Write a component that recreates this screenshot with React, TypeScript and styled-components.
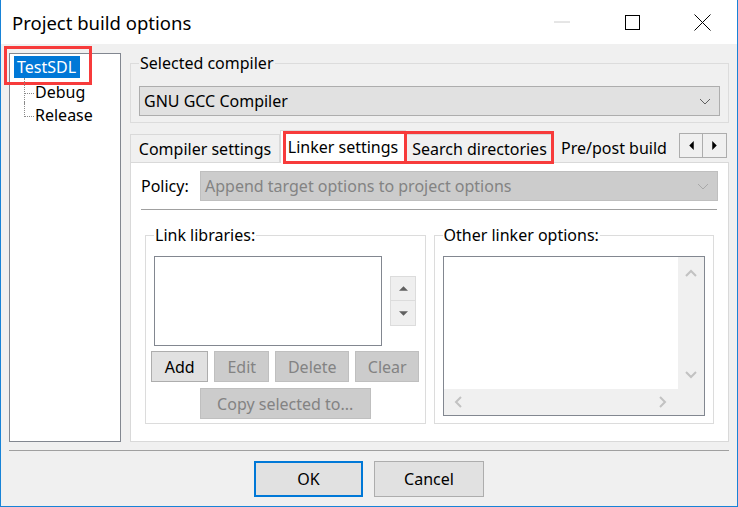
import React, { ReactElement } from 'react';
import styled, { createGlobalStyle, css } from 'styled-components';

const GlobalStyle = createGlobalStyle`
  html, body {
    margin: 0;
    padding: 0;
    background: #ffffff;
  }
  body {
    font-family: 'Noto Sans', 'Open Sans', sans-serif;
    font-size: 16px;
    color: #000000;
  }
  * {
    box-sizing: border-box;
  }
`;

const RED = '#f73b3b';

const Window = styled.div`
  width: 738px;
  height: 507px;
  display: flex;
  flex-direction: column;
  background: #f0f0f0;
  border: 1px solid #1883d7;
  border-top: none;
  overflow: hidden;
`;

const TitleBar = styled.header`
  height: 44px;
  flex: none;
  display: flex;
  align-items: center;
  background: #ffffff;
  padding-left: 11px;
`;

const Title = styled.span`
  flex: 1;
  font-size: 18.5px;
`;

const Controls = styled.div`
  display: flex;
  height: 100%;
`;

const ControlButton = styled.div`
  width: 70px;
  display: flex;
  align-items: center;
  justify-content: center;
`;

const Main = styled.div`
  display: flex;
  gap: 9px;
  padding: 9px 8px 0;
  height: 398px;
  flex: none;
`;

const Tree = styled.div`
  width: 112px;
  flex: none;
  background: #ffffff;
  border: 1px solid #828790;
  padding: 2px 0 0 4px;
`;

const RootLabel = styled.span`
  position: relative;
  display: inline-block;
  height: 22px;
  line-height: 22px;
  padding: 0 4px 0 3px;
  background: #0078d7;
  color: #ffffff;

  &::after {
    content: '';
    position: absolute;
    top: -10px;
    left: -10px;
    right: -12px;
    bottom: -7px;
    border: 3px solid ${RED};
  }
`;

const Children = styled.div`
  margin: 3px 0 0 10px;
`;

const ChildRow = styled.div<{ $last?: boolean }>`
  position: relative;
  height: 23px;
  line-height: 23px;
  padding-left: 11px;

  &::before {
    content: '';
    position: absolute;
    left: 0;
    top: -3px;
    width: 9px;
    height: 15px;
    border-left: 1px dotted #8a8a8a;
    border-bottom: 1px dotted #8a8a8a;
  }

  ${({ $last }) =>
    !$last &&
    css`
      &::after {
        content: '';
        position: absolute;
        left: 0;
        top: 12px;
        bottom: 0;
        border-left: 1px dotted #8a8a8a;
      }
    `}
`;

const RightCol = styled.div`
  flex: 1;
  min-width: 0;
  display: flex;
  flex-direction: column;
`;

const Group = styled.fieldset<{ $grow?: boolean }>`
  margin: 0;
  min-width: 0;
  border: 1px solid #dcdcdc;
  padding: 0 8px 6px;
  ${({ $grow }) =>
    $grow &&
    css`
      flex: 1;
      display: flex;
      flex-direction: column;
      align-items: center;
      padding-bottom: 4px;
    `}
`;

const Legend = styled.legend`
  padding: 0 1px;
  line-height: 20px;
  height: 20px;
`;

const Combo = styled.div<{ $disabled?: boolean }>`
  height: 30px;
  display: flex;
  align-items: center;
  justify-content: space-between;
  padding: 0 8px 0 4px;
  background: #e1e1e1;
  border: 1px solid #adadad;
  white-space: nowrap;
  ${({ $disabled }) =>
    $disabled &&
    css`
      background: #cccccc;
      border-color: #bfbfbf;
      color: #838383;
    `}
`;

const CompilerCombo = styled(Combo)`
  margin-top: 13px;
`;

const TabRow = styled.div`
  display: flex;
  align-items: flex-end;
  height: 32px;
  margin-top: 7px;
`;

const Tab = styled.div<{ $active?: boolean; $marked?: boolean; $w?: number }>`
  position: relative;
  width: ${({ $w }) => ($w ? `${$w}px` : 'auto')};
  flex: none;
  height: 28px;
  display: flex;
  align-items: center;
  justify-content: center;
  white-space: nowrap;
  background: #f0f0f0;
  border: 1px solid #d9d9d9;
  border-bottom: none;

  ${({ $active }) =>
    $active &&
    css`
      height: 33px;
      margin-bottom: -1px;
      padding-bottom: 1px;
      background: #ffffff;
      z-index: 1;
    `}

  ${({ $marked, $active }) =>
    $marked &&
    css`
      &::after {
        content: '';
        position: absolute;
        top: ${$active ? 0 : -4}px;
        left: ${$active ? 2 : -3}px;
        right: -2px;
        bottom: ${$active ? -1 : -2}px;
        border: 3px solid ${RED};
        z-index: 2;
      }
    `}
`;

const PlainTab = styled.div`
  flex: 1;
  min-width: 0;
  height: 28px;
  display: flex;
  align-items: center;
  padding-left: 8px;
  white-space: nowrap;
  overflow: hidden;
`;

const ArrowPair = styled.div`
  display: flex;
  flex: none;
  margin: 0 2px 4px 0;
`;

const ArrowButton = styled.div`
  width: 24px;
  height: 25px;
  display: flex;
  align-items: center;
  justify-content: center;
  background: #f0f0f0;
  border: 1px solid #adadad;
  & + & {
    border-left: none;
  }
`;

const Panel = styled.div`
  flex: 1;
  display: flex;
  flex-direction: column;
  background: #ffffff;
  border: 1px solid #d9d9d9;
  padding: 8px 10px 0;
`;

const PolicyRow = styled.div`
  display: flex;
  align-items: center;
`;

const PolicyLabel = styled.span`
  width: 59px;
  flex: none;
`;

const PolicyCombo = styled(Combo)`
  flex: 1;
`;

const Rule = styled.div`
  height: 1px;
  background: #a0a0a0;
  margin: 8px 1px 0 0;
`;

const FooterRule = styled.div`
  height: 1px;
  background: #a0a0a0;
`;

const GroupRow = styled.div`
  display: flex;
  gap: 8px;
  padding: 0 4px;
  margin-top: 15px;
  height: 199px;
`;

const ListRow = styled.div`
  display: flex;
  align-items: center;
  gap: 8px;
  margin-top: 11px;
`;

const ListBox = styled.div`
  width: 228px;
  height: 90px;
  background: #ffffff;
  border: 1px solid #828790;
`;

const Spin = styled.div`
  display: flex;
  flex-direction: column;
`;

const SpinButton = styled.div`
  width: 26px;
  height: 25px;
  display: flex;
  align-items: center;
  justify-content: center;
  background: #efefef;
  border: 1px solid #dcdcdc;
  & + & {
    border-top: none;
  }
`;

const ButtonRow = styled.div`
  display: flex;
  gap: 6px;
  margin-top: 5px;
`;

const Button = styled.div<{ $w: number; $h?: number; $disabled?: boolean; $default?: boolean }>`
  width: ${({ $w }) => $w}px;
  height: ${({ $h = 31 }) => $h}px;
  display: flex;
  align-items: center;
  justify-content: center;
  background: #e1e1e1;
  border: 1px solid #adadad;
  white-space: nowrap;
  ${({ $disabled }) =>
    $disabled &&
    css`
      background: #cccccc;
      border-color: #bfbfbf;
      color: #838383;
    `}
  ${({ $default }) =>
    $default &&
    css`
      border: 2px solid #0078d7;
    `}
`;

const CopyButton = styled(Button)`
  margin-top: 6px;
`;

const TextArea = styled.div`
  width: 262px;
  height: 160px;
  margin-top: 11px;
  display: grid;
  grid-template-columns: 1fr 26px;
  grid-template-rows: 1fr 26px;
  background: #ffffff;
  border: 1px solid #828790;
`;

const ScrollTrack = styled.div<{ $horizontal?: boolean }>`
  background: #f0f0f0;
  display: flex;
  align-items: center;
  justify-content: space-between;
  ${({ $horizontal }) =>
    $horizontal
      ? css`
          grid-column: 1 / 3;
          padding: 0 36px 0 9px;
        `
      : css`
          flex-direction: column;
          padding: 11px 0 9px;
        `}
`;

const Footer = styled.footer`
  display: flex;
  flex-direction: column;
  padding: 8px 8px 0;
`;

const FooterButtons = styled.div`
  display: flex;
  justify-content: center;
  gap: 11px;
  padding-top: 10px;
`;

type Dir = 'up' | 'down' | 'left' | 'right';

const Chevron = ({ dir, color = '#606060', weight = 2, size = 12 }: { dir: Dir; color?: string; weight?: number; size?: number }) => {
  const rot = { down: 0, up: 180, left: 90, right: -90 }[dir];
  return (
    <svg width={size} height={size} viewBox="0 0 12 12" style={{ transform: `rotate(${rot}deg)` }}>
      <polyline points="1,4 6,9 11,4" fill="none" stroke={color} strokeWidth={weight} />
    </svg>
  );
};

const Triangle = ({ dir, color = '#000' }: { dir: Dir; color?: string }) => {
  const pts = {
    up: '0,4 4,0 8,4',
    down: '0,0 8,0 4,4',
    left: '4,0 4,8 0,4',
    right: '0,0 0,8 4,4',
  }[dir];
  const vertical = dir === 'up' || dir === 'down';
  return (
    <svg width={vertical ? 9 : 5} height={vertical ? 5 : 9} viewBox={vertical ? '0 0 8 4' : '0 0 4 8'}>
      <polygon points={pts} fill={color} />
    </svg>
  );
};

const App = (): ReactElement => (
  <>
    <GlobalStyle />
    <Window>
      <TitleBar>
        <Title>Project build options</Title>
        <Controls>
          <ControlButton>
            <svg width="16" height="2" viewBox="0 0 16 2">
              <line x1="0" y1="1" x2="16" y2="1" stroke="#cccccc" strokeWidth="1" />
            </svg>
          </ControlButton>
          <ControlButton>
            <svg width="15" height="15" viewBox="0 0 15 15">
              <rect x="0.5" y="0.5" width="14" height="14" fill="none" stroke="#000" strokeWidth="1" />
            </svg>
          </ControlButton>
          <ControlButton>
            <svg width="17" height="17" viewBox="0 0 17 17">
              <path d="M0.5 0.5 L16.5 16.5 M16.5 0.5 L0.5 16.5" stroke="#000" strokeWidth="1" />
            </svg>
          </ControlButton>
        </Controls>
      </TitleBar>

      <Main>
        <Tree>
          <RootLabel>TestSDL</RootLabel>
          <Children>
            <ChildRow>Debug</ChildRow>
            <ChildRow $last>Release</ChildRow>
          </Children>
        </Tree>

        <RightCol>
          <Group>
            <Legend>Selected compiler</Legend>
            <CompilerCombo>
              <span>GNU GCC Compiler</span>
              <Chevron dir="down" weight={1} />
            </CompilerCombo>
          </Group>

          <TabRow>
            <Tab $w={150}>Compiler settings</Tab>
            <Tab $w={126} $active $marked>
              Linker settings
            </Tab>
            <Tab $w={147} $marked>
              Search directories
            </Tab>
            <PlainTab>Pre/post build</PlainTab>
            <ArrowPair>
              <ArrowButton>
                <Triangle dir="left" />
              </ArrowButton>
              <ArrowButton>
                <Triangle dir="right" />
              </ArrowButton>
            </ArrowPair>
          </TabRow>

          <Panel>
            <PolicyRow>
              <PolicyLabel>Policy:</PolicyLabel>
              <PolicyCombo $disabled>
                <span>Append target options to project options</span>
                <Chevron dir="down" color="#a8a8a8" weight={1} />
              </PolicyCombo>
            </PolicyRow>
            <Rule />
            <GroupRow>
              <Group $grow>
                <Legend>Link libraries:</Legend>
                <ListRow>
                  <ListBox />
                  <Spin>
                    <SpinButton>
                      <Triangle dir="up" color="#606060" />
                    </SpinButton>
                    <SpinButton>
                      <Triangle dir="down" color="#606060" />
                    </SpinButton>
                  </Spin>
                </ListRow>
                <ButtonRow>
                  <Button $w={57}>Add</Button>
                  <Button $w={55} $disabled>
                    Edit
                  </Button>
                  <Button $w={74} $disabled>
                    Delete
                  </Button>
                  <Button $w={64} $disabled>
                    Clear
                  </Button>
                </ButtonRow>
                <CopyButton $w={171} $disabled>
                  Copy selected to...
                </CopyButton>
              </Group>

              <Group $grow>
                <Legend>Other linker options:</Legend>
                <TextArea>
                  <div />
                  <ScrollTrack>
                    <Chevron dir="up" color="#c2c2c2" />
                    <Chevron dir="down" color="#c2c2c2" />
                  </ScrollTrack>
                  <ScrollTrack $horizontal>
                    <Chevron dir="left" color="#c2c2c2" />
                    <Chevron dir="right" color="#c2c2c2" />
                  </ScrollTrack>
                </TextArea>
              </Group>
            </GroupRow>
          </Panel>
        </RightCol>
      </Main>

      <Footer>
        <FooterRule />
        <FooterButtons>
          <Button $w={109} $h={36} $default>
            OK
          </Button>
          <Button $w={110} $h={36}>
            Cancel
          </Button>
        </FooterButtons>
      </Footer>
    </Window>
  </>
);

export default App;
